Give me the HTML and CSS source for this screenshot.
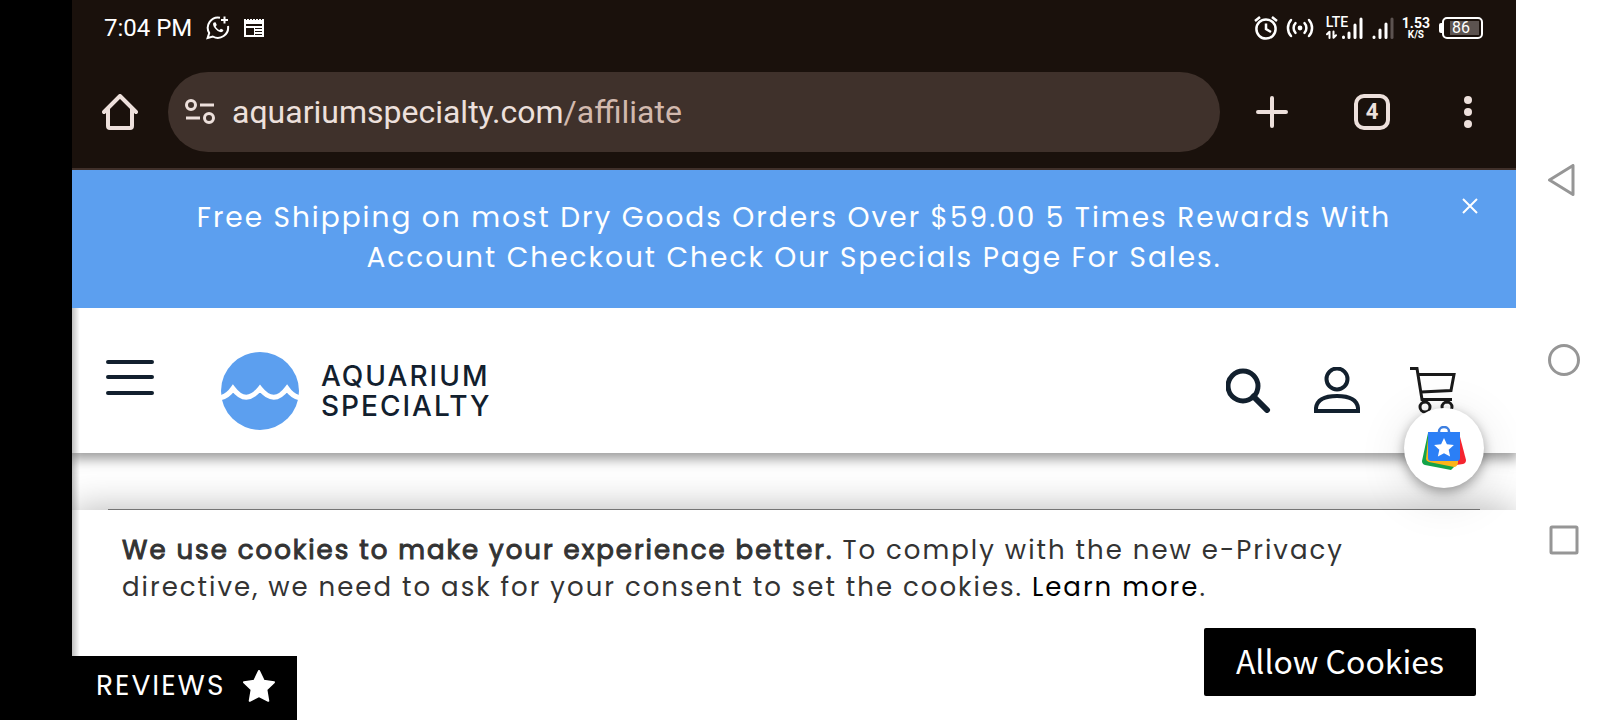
FILE: index.html
```html
<!DOCTYPE html>
<html lang="en">
<head>
    <meta charset="UTF-8">
    <meta name="viewport" content="width=device-width, initial-scale=1.0">
    <title>Aquarium Specialty</title>
    <link rel="stylesheet" href="styles.css">
</head>
<body>
    <div class="cutout"></div>

    <div class="screen">
        <div class="status-bar">
            <span class="clock">7:04 PM</span>
            <svg class="status-whatsapp" width="24" height="24" viewBox="0 0 24 24" fill="none" stroke="#fff" stroke-width="2">
                <path d="M14 1.7A10.3 10.3 0 0 0 3.2 17L1.6 22l5.2-1.5A10.3 10.3 0 0 0 22 10"/>
                <path d="M15 4h7M18.5 .5v7"/>
                <path d="M7.8 6.5c-3 2 3.5 10.5 8 9.6 1.5-.4 1.9-1.7 1.2-2.3l-2-1.1-1.6 1.3c-1.4-.5-3.2-2.3-3.7-3.6l1.1-1.5-1.3-2.6z" fill="#fff" stroke="none"/>
            </svg>
            <svg width="20" height="18" viewBox="0 0 20 18">
                <path d="M0 0h2v1h1V0h2v1h1V0h2v1h1V0h2v1h1V0h2v1h1V0h2v1h1V0h2v18H0z" fill="#fff"/>
                <path d="M2 5h16v2H2zM2 9h8v7H2zM11 9h7v1h-7zM11 12h7v1h-7zM11 15h7v1h-7z" fill="#1a110c"/>
            </svg>

            <div class="status-right">
                <svg width="24" height="24" viewBox="0 0 24 24" fill="none" stroke="#fff" stroke-width="2.5">
                    <circle cx="12" cy="13" r="9.6"/>
                    <path d="M12 7.500V13l5 3M1 5l5-4M23 5l-5-4"/>
                </svg>
                <svg width="28" height="20" viewBox="0 0 28 20" fill="none" stroke="#fff" stroke-width="2.5" stroke-linecap="round">
                    <circle cx="14" cy="10" r="2.4" fill="#fff" stroke="none"/>
                    <path d="M9.5 5.2a7 7 0 0 0 0 9.6M5 2a12 12 0 0 0 0 16M18.5 5.2a7 7 0 0 1 0 9.6M23 2a12 12 0 0 1 0 16"/>
                </svg>
                <div class="lte">
                    <span>LTE</span>
                    <svg width="38" height="22" viewBox="0 0 38 22" fill="none" stroke="#fff" stroke-width="3" stroke-linecap="round">
                        <path d="M3.5 21v-6M1 17.3l2.5-2.5M7.5 14.5v6M10 18.3l-2.5 2.5" stroke-width="2"/>
                        <path d="M17.5 20v.5M23 16v4.5M29 8v12.5M35 2v18.5"/>
                    </svg>
                </div>
                <svg width="22" height="22" viewBox="0 0 22 22" fill="none" stroke="#fff" stroke-width="3" stroke-linecap="round">
                    <path d="M2 20v.5M8 13v7.5M14 7v13.5"/>
                    <path d="M20 2v18.5" stroke="#5c5350"/>
                </svg>
                <div class="speed"><b>1.53</b><small>K/S</small></div>
                <div class="battery"><span>86</span></div>
            </div>
        </div>

        <div class="toolbar">
            <button class="icon-btn" aria-label="Home">
                <svg width="36" height="36" viewBox="0 0 36 36" fill="none" stroke="#ede0dc" stroke-width="4" stroke-linejoin="round" stroke-linecap="round">
                    <path d="M2 18L18 2l16 16"/>
                    <path d="M6 15v17q0 2 2 2h20q2 0 2-2V15"/>
                </svg>
            </button>
            <div class="address">
                <svg width="30" height="26" viewBox="0 0 30 26" fill="none" stroke="#ede0dc" stroke-width="3">
                    <circle cx="6" cy="6" r="4.5"/>
                    <circle cx="24" cy="19" r="4.5"/>
                    <path d="M15 6h14M1 19h14"/>
                </svg>
                <div class="url">aquariumspecialty.com<span>/affiliate</span></div>
            </div>
            <button class="icon-btn" aria-label="New tab">
                <svg width="32" height="32" viewBox="0 0 32 32" stroke="#ede0dc" stroke-width="4" stroke-linecap="round">
                    <path d="M16 2v28M2 16h28"/>
                </svg>
            </button>
            <button class="tabs" aria-label="Tabs">4</button>
            <button class="icon-btn" aria-label="More">
                <svg width="8" height="32" viewBox="0 0 8 32" fill="#ede0dc">
                    <circle cx="4" cy="4" r="4"/>
                    <circle cx="4" cy="16" r="4"/>
                    <circle cx="4" cy="28" r="4"/>
                </svg>
            </button>
        </div>

        <div class="site">
            <div class="promo">
                <p>Free Shipping on most Dry Goods Orders Over $59.00 5 Times Rewards With<br>Account Checkout Check Our Specials Page For Sales.</p>
                <button class="icon-btn promo-close" aria-label="Close">
                    <svg width="16" height="16" viewBox="0 0 16 16" stroke="#fff" stroke-width="2">
                        <path d="M1 1l14 14M15 1L1 15"/>
                    </svg>
                </button>
            </div>

            <header class="header">
                <button class="icon-btn menu" aria-label="Menu">
                    <svg width="50" height="36" viewBox="0 0 50 36" stroke="#12202e" stroke-width="4" stroke-linecap="round">
                        <path d="M3 3h44M3 18h44M3 34h44"/>
                    </svg>
                </button>
                <a class="logo" href="#">
                    <svg width="78" height="78" viewBox="0 0 78 78">
                        <circle cx="39" cy="39" r="39" fill="#5c9fef"/>
                        <path d="M-1 46Q7 44 12 36.500Q25 54 39 36.500Q53 54 66 36.500Q71 44 79 46" fill="none" stroke="#fff" stroke-width="5"/>
                    </svg>
                    <span>AQUARIUM<br>SPECIALTY</span>
                </a>
                <nav class="actions">
                    <a href="#" aria-label="Search">
                        <svg width="46" height="46" viewBox="0 0 46 46" fill="none" stroke="#12202e" stroke-width="5">
                            <circle cx="17" cy="19" r="15"/>
                            <path d="M27.5 29.5L41 43" stroke-width="6" stroke-linecap="round"/>
                        </svg>
                    </a>
                    <a href="#" aria-label="Account">
                        <svg width="46" height="46" viewBox="0 0 46 46" fill="none" stroke="#12202e" stroke-width="4">
                            <circle cx="23" cy="12" r="10.5"/>
                            <path d="M2 44v-3C3 33 11 29 23 29s20 4 21 12v3z"/>
                        </svg>
                    </a>
                    <a class="cart" href="#" aria-label="Cart">
                        <svg width="46" height="50" viewBox="0 0 46 50" fill="none" stroke="#1a1a1a" stroke-width="3">
                            <path d="M0 1.5h7l5 31h30M8 7.5h36l-3 16-30 1.5M14 33l-1 3M36 33l2 3"/>
                            <circle cx="15" cy="40" r="5"/>
                            <circle cx="37" cy="40" r="5"/>
                        </svg>
                    </a>
                </nav>
                <button class="fab" aria-label="Shopping offers">
                    <svg width="44" height="44" viewBox="0 0 44 44">
                        <path d="M6 7L0 35q0 3 3 4l26 5 4-4z" fill="#14a349"/>
                        <path d="M37 7l7 27q0 3-3 4l-7 1z" fill="#f5242f"/>
                        <path d="M6 12L4 33q0 2 3 3l25 5q3 0 4-4V12z" fill="#fbb41a"/>
                        <path d="M6 6h32v26q0 3-3 3H9q-3 0-3-3z" fill="#2b7ff6"/>
                        <path d="M17 7V5.500a5 4.500 0 0 1 10 0V7" fill="none" stroke="#3d7fe0" stroke-width="2.5"/>
                        <path d="M22 12l2.9 6.3 7 .8-5.2 4.7 1.4 6.8-6.1-3.4-6.1 3.4 1.4-6.8-5.2-4.7 7-.8z" fill="#fff"/>
                    </svg>
                </button>
            </header>

            <main class="content">
                <hr>
            </main>

            <section class="cookies">
                <p><strong>We use cookies to make your experience better.</strong> To comply with the new e-Privacy<br>directive, we need to ask for your consent to set the cookies. <a href="#">Learn more</a>.</p>
                <button class="allow">Allow Cookies</button>
            </section>

            <button class="reviews">
                REVIEWS
                <svg width="34" height="32" viewBox="0 0 34 32" fill="#fff" stroke="#fff" stroke-width="2" stroke-linejoin="round">
                    <path d="M17 1l4.7 9.8L32 12.2l-7.6 7.4 1.9 11.2L17 26l-9.3 4.8 1.9-11.2L2 12.2l10.3-1.4z"/>
                </svg>
            </button>
        </div>
    </div>

    <div class="nav-keys">
        <button class="icon-btn" aria-label="Back">
            <svg width="32" height="32" viewBox="0 0 32 32" fill="none" stroke="#969696" stroke-width="3" stroke-linejoin="round">
                <path d="M1.5 16L25 1.5v29z"/>
            </svg>
        </button>
        <button class="icon-btn" aria-label="Home screen">
            <svg width="32" height="32" viewBox="0 0 32 32" fill="none" stroke="#969696" stroke-width="3">
                <circle cx="16" cy="16" r="14.5"/>
            </svg>
        </button>
        <button class="icon-btn" aria-label="Recent apps">
            <svg width="32" height="32" viewBox="0 0 32 32" fill="none" stroke="#969696" stroke-width="3">
                <rect x="3" y="3" width="26" height="26" rx="1"/>
            </svg>
        </button>
    </div>
</body>
</html>
```
FILE: styles.css
```css
* {
    margin: 0;
    padding: 0;
    box-sizing: border-box;
}

body {
    display: grid;
    grid-template-columns: 72px 1fr 96px;
    min-height: 100vh;
    background: #fff;
    font-family: Poppins, Inter, sans-serif;
}

svg {
    display: block;
    flex-shrink: 0;
}

button {
    border: none;
    background: none;
    font-family: inherit;
    color: inherit;
    cursor: pointer;
}

a {
    color: inherit;
    text-decoration: none;
}

.icon-btn {
    display: flex;
}

.cutout {
    background: #000;
}

.screen {
    display: flex;
    flex-direction: column;
}

/* Status bar */
.status-bar {
    display: flex;
    align-items: center;
    height: 56px;
    padding: 0 33px 0 32px;
    background: #1a110c;
    color: #fff;
    font-family: Roboto, sans-serif;
}

.clock {
    font-size: 24px;
}

.status-whatsapp {
    margin: 0 14px;
}

.status-right {
    display: flex;
    align-items: center;
    gap: 8px;
    margin-left: auto;
}

.lte {
    width: 38px;
    height: 22px;
    margin: 0 0 0 4px;
}

.lte span {
    display: block;
    height: 11px;
    font-size: 14px;
    line-height: 11px;
    font-weight: 500;
}

.lte svg {
    margin-top: -11px;
}

.speed {
    display: flex;
    flex-direction: column;
    align-items: center;
    font-size: 14px;
    line-height: 13px;
}

.speed b {
    font-weight: bold;
}

.speed small {
    font-size: 10px;
    line-height: 10px;
    font-weight: bold;
}

.battery {
    position: relative;
    width: 41px;
    height: 22px;
    margin-left: 4px;
    padding: 2px;
    border: 2px solid #fff;
    border-radius: 5px;
}

.battery::before {
    content: "";
    position: absolute;
    left: -5px;
    top: 4px;
    width: 3px;
    height: 10px;
    background: #fff;
    border-radius: 2px 0 0 2px;
}

.battery span {
    display: block;
    height: 14px;
    margin-left: 4px;
    padding-left: 2px;
    background: #5c5350;
    font-size: 16px;
    line-height: 14px;
}

/* Browser toolbar */
.toolbar {
    display: flex;
    align-items: center;
    height: 114px;
    padding: 0 44px 0 30px;
    background: #1a110c;
    border-bottom: 2px solid #40302a;
    color: #ede0dc;
    font-family: Roboto, sans-serif;
}

.address {
    display: flex;
    align-items: center;
    flex: 1;
    gap: 17px;
    height: 80px;
    margin: 0 36px 0 30px;
    padding: 0 17px;
    border-radius: 40px;
    background: #3f312b;
}

.url {
    font-size: 32px;
}

.url span {
    color: #d2b9ae;
}

.tabs {
    width: 36px;
    height: 36px;
    margin: 0 74px 0 66px;
    border: 4px solid #ede0dc;
    border-radius: 10px;
    font-family: Roboto, sans-serif;
    font-size: 22px;
    line-height: 28px;
    font-weight: bold;
}

/* Web page */
.site {
    position: relative;
    display: flex;
    flex-direction: column;
    flex: 1;
    overflow: hidden;
}

/* soft edge beside the camera cutout */
.site::before {
    content: "";
    position: absolute;
    top: 138px;
    bottom: 0;
    left: 0;
    z-index: 2;
    width: 8px;
    background: linear-gradient(to right, rgba(0, 0, 0, 0.25), transparent);
}

.promo {
    position: relative;
    z-index: 3;
    padding: 28px 80px 30px;
    background: #5c9fef;
    color: #fff;
    font-size: 28px;
    line-height: 40px;
    letter-spacing: 2px;
    text-align: center;
}

.promo-close {
    position: absolute;
    top: 28px;
    right: 38px;
}

.header {
    position: relative;
    z-index: 1;
    display: flex;
    align-items: flex-start;
    height: 145px;
    padding: 44px 60px 0 33px;
    background: #fff;
    box-shadow: 0 4px 12px 2px rgba(0, 0, 0, 0.4);
    color: #12202e;
}

.menu {
    margin-top: 7px;
}

.logo {
    display: flex;
    align-items: center;
    gap: 22px;
    margin-left: 66px;
    font-family: Inter, sans-serif;
    font-size: 28px;
    line-height: 30px;
    font-weight: 500;
    letter-spacing: 2px;
}

.actions {
    display: flex;
    gap: 42px;
    margin: 15px 0 0 auto;
}

.cart {
    margin-left: 8px;
}

.fab {
    position: absolute;
    right: 32px;
    bottom: -35px;
    display: flex;
    align-items: center;
    justify-content: center;
    width: 80px;
    height: 80px;
    border-radius: 50%;
    background: #fff;
    box-shadow: 0 4px 12px rgba(0, 0, 0, 0.35), 0 10px 50px rgba(0, 0, 0, 0.12);
}

.content {
    display: flex;
    flex-direction: column;
    justify-content: flex-end;
    height: 57px;
    padding: 0 36px;
    background: #fff;
}

.content hr {
    border: none;
    border-top: 1px solid #888;
}

.cookies {
    display: flex;
    flex-direction: column;
    flex: 1;
    padding: 22px 40px 24px 50px;
    background: #fff;
    box-shadow: 0 0 36px rgba(0, 0, 0, 0.3);
    color: #333;
    font-size: 26px;
    line-height: 37px;
    letter-spacing: 2px;
}

.cookies strong {
    font-weight: normal;
    -webkit-text-stroke: 1px #333;
}

.cookies a {
    color: #000;
}

.allow {
    align-self: flex-end;
    margin-top: auto;
    padding: 0 32px 4px;
    border-radius: 2px;
    background: #000;
    color: #fff;
    font-family: "Noto Sans CJK SC", sans-serif;
    font-size: 32px;
    line-height: 64px;
}

.reviews {
    position: absolute;
    left: 0;
    bottom: 0;
    z-index: 3;
    display: flex;
    align-items: center;
    gap: 17px;
    height: 64px;
    padding: 0 21px 4px 24px;
    background: #000;
    color: #fff;
    font-size: 28px;
    letter-spacing: 2px;
}

/* System navigation */
.nav-keys {
    display: flex;
    flex-direction: column;
    align-items: center;
    justify-content: space-around;
    padding: 90px 0;
}
```
